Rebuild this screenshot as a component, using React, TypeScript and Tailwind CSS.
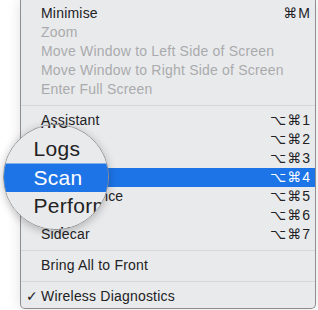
import type { ReactNode } from "react"

type Row =
  | { kind: "item"; label: string; key?: string; muted?: boolean; active?: boolean; checked?: boolean }
  | { kind: "sep" }

const rows: Row[] = [
  { kind: "item", label: "Minimise", key: "⌘M" },
  { kind: "item", label: "Zoom", muted: true },
  { kind: "item", label: "Move Window to Left Side of Screen", muted: true },
  { kind: "item", label: "Move Window to Right Side of Screen", muted: true },
  { kind: "item", label: "Enter Full Screen", muted: true },
  { kind: "sep" },
  { kind: "item", label: "Assistant", key: "⌥⌘1" },
  { kind: "item", label: "Info", key: "⌥⌘2" },
  { kind: "item", label: "Logs", key: "⌥⌘3" },
  { kind: "item", label: "Scan", key: "⌥⌘4", active: true },
  { kind: "item", label: "Performance", key: "⌥⌘5" },
  { kind: "item", label: "Sniffer", key: "⌥⌘6" },
  { kind: "item", label: "Sidecar", key: "⌥⌘7" },
  { kind: "sep" },
  { kind: "item", label: "Bring All to Front" },
  { kind: "sep" },
  { kind: "item", label: "Wireless Diagnostics", checked: true },
]

function Menu() {
  return (
    <div className="h-[310px] w-[318px] bg-white pl-[20px] pr-[2px]">
      <div className="h-[309px] rounded-b-[5px] border-x border-b border-[#8e8e90] bg-[#e9eaec] pt-[4px] shadow-[0_0_14px_rgba(0,0,0,0.12)]">
        {rows.map((r, i) =>
          r.kind === "sep" ? (
            <div key={i} className="flex h-[12px] items-center">
              <div className="h-px w-full bg-[#d6d7d9]" />
            </div>
          ) : (
            <div
              key={i}
              className={`flex h-[19px] items-center justify-between pl-[20px] pr-[4px] text-[14px] ${
                r.active ? "bg-[#1d74e7] text-white" : r.muted ? "text-[#a9aaac]" : "text-[#222224]"
              }`}
            >
              <span className="relative tracking-[0.2px]">
                {r.checked && <span className="absolute left-[-15px] top-0">✓</span>}
                {r.label}
              </span>
              {r.key && <span className="tracking-[1px]">{r.key}</span>}
            </div>
          )
        )}
      </div>
    </div>
  )
}

function Lens({ children }: { children: ReactNode }) {
  return (
    <div className="absolute left-[3px] top-[124px] h-[106px] w-[106px] overflow-hidden rounded-full border border-[#8f8f91] shadow-[0_2px_8px_rgba(0,0,0,0.25)]">
      <div className="absolute left-[-4px] top-[-125px] h-[310px] w-[318px] origin-[56px_177px] scale-150">
        {children}
      </div>
    </div>
  )
}

export default function App() {
  return (
    <div className="relative h-[310px] w-[318px] overflow-hidden bg-white font-['Liberation_Sans','DejaVu_Sans',sans-serif]">
      <Menu />
      <Lens>
        <Menu />
      </Lens>
    </div>
  )
}
